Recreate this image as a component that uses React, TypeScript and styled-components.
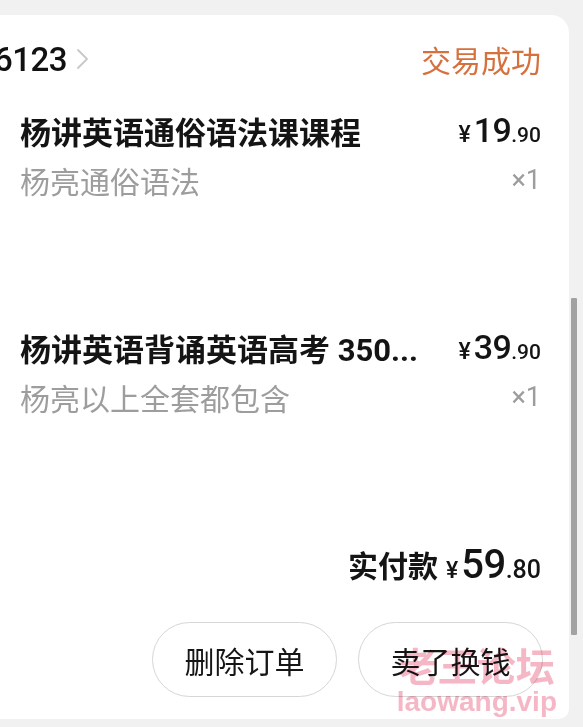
import React from "react";
import styled, { createGlobalStyle } from "styled-components";

const Global = createGlobalStyle`
  html, body { margin: 0; padding: 0; }
  body {
    background: #f1f1f1;
    overflow: hidden;
    font-family: Roboto, "Noto Sans CJK SC", sans-serif;
  }
  * { box-sizing: border-box; }
`;

const Page = styled.div`
  position: relative;
  display: flex;
  height: 727px;
  padding-top: 15px;
  overflow: hidden;
`;

const Card = styled.div`
  flex: 1;
  height: 704px;
  background: #ffffff;
  border-top-right-radius: 18px;
  border-bottom-right-radius: 10px;
  padding: 0 28px 0 20px;
  display: flex;
  flex-direction: column;
`;

const Gutter = styled.div`
  width: 14px;
  padding-top: 283px;
  padding-left: 2px;
`;

const Thumb = styled.div`
  width: 6px;
  height: 337px;
  background: #a2a2a2;
  border-radius: 1px;
`;

const Header = styled.div`
  height: 88px;
  display: flex;
  align-items: center;
  justify-content: space-between;
`;

const OrderNo = styled.div`
  display: flex;
  align-items: center;
  gap: 9px;
  margin-left: -26px;
  font-size: 33px;
  font-weight: 500;
  color: #111;
  letter-spacing: -0.5px;
`;

const Status = styled.div`
  font-size: 30px;
  color: #d6703d;
  font-family: "Noto Sans CJK SC", sans-serif;
`;

const Item = styled.div`
  height: 217px;
  padding-top: 7px;
  display: flex;
  flex-direction: column;
  gap: 10px;
`;

const Row = styled.div`
  display: flex;
  align-items: center;
  justify-content: space-between;
  height: 40px;
`;

const Title = styled.div`
  font-size: 31px;
  font-weight: 700;
  color: #141414;
  white-space: nowrap;
`;

const Sub = styled.div`
  font-size: 30px;
  color: #9d9d9d;
  font-family: "Noto Sans CJK SC", sans-serif;
`;

const Qty = styled.div`
  font-size: 27px;
  color: #9d9d9d;
  font-family: Roboto, sans-serif;
`;

const Price = styled.div`
  display: flex;
  align-items: baseline;
  color: #141414;
  font-family: Roboto, sans-serif;
  font-weight: 500;
`;

const Yen = styled.span<{ $size: number }>`
  font-size: ${(p) => p.$size}px;
  margin-right: 3px;
`;

const Int = styled.span<{ $size: number }>`
  font-size: ${(p) => p.$size}px;
  font-weight: 500;
  letter-spacing: -0.5px;
`;

const Dec = styled.span<{ $size: number }>`
  font-size: ${(p) => p.$size}px;
`;

const Total = styled.div`
  margin-top: 5px;
  height: 44px;
  display: flex;
  align-items: center;
  justify-content: flex-end;
  gap: 8px;
`;

const TotalLabel = styled.span`
  font-size: 30px;
  font-weight: 700;
  color: #141414;
  font-family: "Noto Sans CJK SC", sans-serif;
`;

const Actions = styled.div`
  margin-top: 36px;
  display: flex;
  justify-content: flex-end;
  gap: 21px;
  margin-right: -2px;
`;

const Pill = styled.button`
  width: 185px;
  height: 75px;
  border-radius: 38px;
  border: 1px solid #d6d6d6;
  background: #fff;
  font-family: "Noto Sans CJK SC", sans-serif;
  font-size: 30px;
  color: #161616;
  padding: 0;
  display: flex;
  align-items: center;
  justify-content: center;
`;

const Watermark = styled.div`
  position: absolute;
  right: 26px;
  bottom: 9px;
  display: flex;
  flex-direction: column;
  align-items: center;
  color: rgba(238, 135, 158, 0.6);
  mix-blend-mode: multiply;
  pointer-events: none;
  font-weight: 700;
`;

const WmCn = styled.div`
  font-family: "Noto Sans CJK SC", sans-serif;
  font-size: 39px;
  line-height: 44px;
`;

const WmEn = styled.div`
  font-family: "Liberation Sans", Arial, sans-serif;
  font-size: 28px;
  line-height: 32px;
`;

const Chevron = () => (
  <svg width="13" height="22" viewBox="0 0 13 22" fill="none">
    <polyline points="2,2 11,11 2,20" stroke="#c8c8c8" strokeWidth="1.8" strokeLinecap="round" strokeLinejoin="round" />
  </svg>
);

const items = [
  { title: "杨讲英语通俗语法课课程", sub: "杨亮通俗语法", int: "19", dec: ".90" },
  { title: "杨讲英语背诵英语高考 350...", sub: "杨亮以上全套都包含", int: "39", dec: ".90" },
];

export default function App() {
  return (
    <>
      <Global />
      <Page>
        <Card>
          <Header>
            <OrderNo>
              <span>6123</span>
              <Chevron />
            </OrderNo>
            <Status>交易成功</Status>
          </Header>
          {items.map((it) => (
            <Item key={it.title}>
              <Row>
                <Title>{it.title}</Title>
                <Price>
                  <Yen $size={23}>¥</Yen>
                  <Int $size={34}>{it.int}</Int>
                  <Dec $size={21}>{it.dec}</Dec>
                </Price>
              </Row>
              <Row>
                <Sub>{it.sub}</Sub>
                <Qty>×1</Qty>
              </Row>
            </Item>
          ))}
          <Total>
            <TotalLabel>实付款</TotalLabel>
            <Price>
              <Yen $size={23}>¥</Yen>
              <Int $size={40}>59</Int>
              <Dec $size={25}>.80</Dec>
            </Price>
          </Total>
          <Actions>
            <Pill>删除订单</Pill>
            <Pill>卖了换钱</Pill>
          </Actions>
        </Card>
        <Gutter>
          <Thumb />
        </Gutter>
        <Watermark>
          <WmCn>老王论坛</WmCn>
          <WmEn>laowang.vip</WmEn>
        </Watermark>
      </Page>
    </>
  );
}
